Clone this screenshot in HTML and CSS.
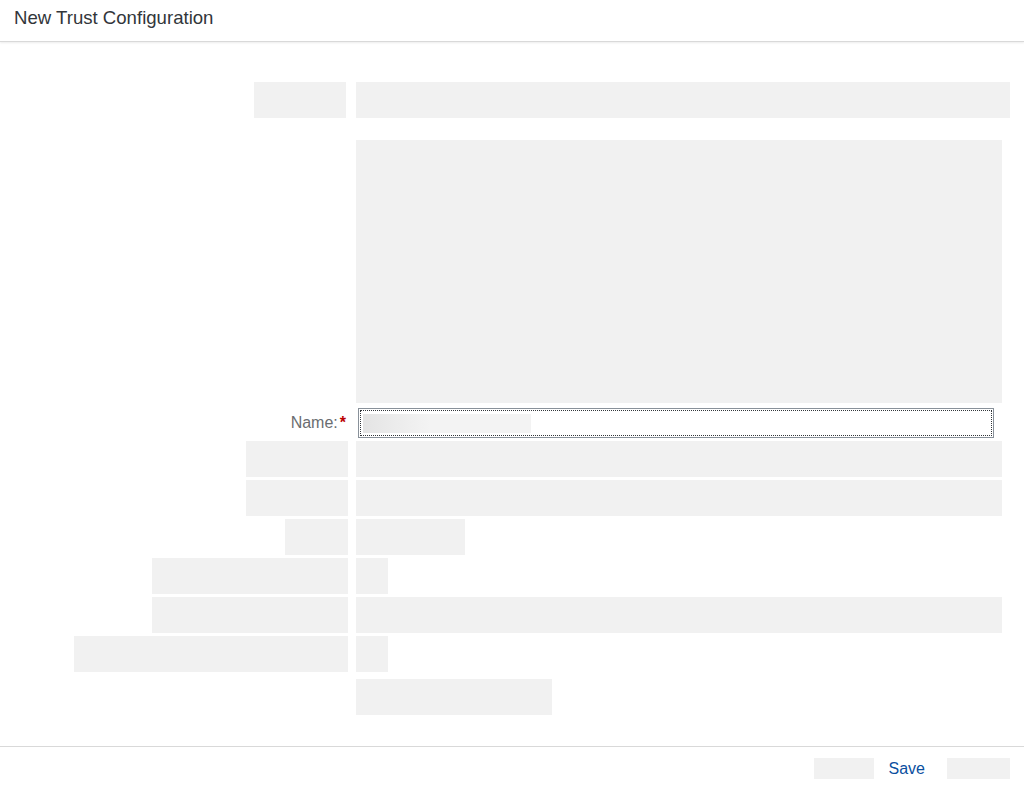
FILE: index.html
```html
<!DOCTYPE html>
<html>
<head>
<meta charset="utf-8">
<link rel="stylesheet" href="styles.css">
</head>
<body>
<div class="dialog">
  <header class="hdr"><h1 class="title">New Trust Configuration</h1></header>
  <main class="form">
    <div class="row r1">
      <div class="lab"><span class="ph w92 h36"></span></div>
      <div class="fld"><span class="ph w654 h36"></span></div>
    </div>
    <div class="row r2">
      <div class="lab"></div>
      <div class="fld"><span class="ph w646 h263"></span></div>
    </div>
    <div class="row rname">
      <div class="lab"><label class="name">Name:<span class="req">*</span></label></div>
      <div class="fld"><div class="input"><span class="blur"></span></div></div>
    </div>
    <div class="row rs">
      <div class="lab"><span class="ph w102 h36"></span></div>
      <div class="fld"><span class="ph w646 h36"></span></div>
    </div>
    <div class="row rs">
      <div class="lab"><span class="ph w102 h36"></span></div>
      <div class="fld"><span class="ph w646 h36"></span></div>
    </div>
    <div class="row rs">
      <div class="lab"><span class="ph w63 h36"></span></div>
      <div class="fld"><span class="ph w109 h36"></span></div>
    </div>
    <div class="row rs">
      <div class="lab"><span class="ph w196 h36"></span></div>
      <div class="fld"><span class="ph w32 h36"></span></div>
    </div>
    <div class="row rs">
      <div class="lab"><span class="ph w196 h36"></span></div>
      <div class="fld"><span class="ph w646 h36"></span></div>
    </div>
    <div class="row rs">
      <div class="lab"><span class="ph w274 h36"></span></div>
      <div class="fld"><span class="ph w32 h36"></span></div>
    </div>
    <div class="row rlast">
      <div class="lab"></div>
      <div class="fld"><span class="ph w196 h36"></span></div>
    </div>
  </main>
  <footer class="ftr">
    <span class="ph w60 h21"></span>
    <button class="btn">Save</button>
    <span class="ph w63 h21"></span>
  </footer>
</div>
</body>
</html>
```
FILE: styles.css
```css
* { box-sizing: border-box; }
html, body { margin: 0; padding: 0; background: #fff; }
body { font-family: "Liberation Sans", Arial, sans-serif; color: #32363a; }
.dialog { width: 1024px; height: 790px; display: flex; flex-direction: column; }
.hdr {
  height: 42px;
  border-bottom: 1px solid #d9d9d9;
  box-shadow: 0 1px 2px rgba(0,0,0,0.08);
  display: flex;
  align-items: center;
  padding: 0 14px;
  flex: none;
}
.title { margin: 0; font-size: 18.6px; font-weight: normal; color: #32363a; padding-bottom: 5px; }
.form { flex: 1; display: flex; flex-direction: column; padding-top: 40px; }
.row { display: flex; align-items: flex-start; }
.lab { width: 348px; display: flex; justify-content: flex-end; flex: none; }
.fld { margin-left: 8px; display: flex; }
.r1 .lab { width: 346px; }
.r1 .fld { margin-left: 10px; }
.r2 { margin-top: 22px; }
.rname { margin-top: 5px; height: 30px; align-items: center; }
.rname .lab { width: 346px; }
.rname .fld { margin-left: 12px; }
.rs { margin-top: 3px; }
.rlast { margin-top: 7px; }
.ph { display: block; background: #f1f1f1; }
.w92 { width: 92px; } .w654 { width: 654px; } .w646 { width: 646px; }
.w102 { width: 102px; } .w63 { width: 63px; } .w109 { width: 109px; }
.w196 { width: 196px; } .w32 { width: 32px; } .w274 { width: 274px; }
.w60 { width: 60px; }
.h36 { height: 36px; } .h263 { height: 263px; } .h21 { height: 21px; }
.name { font-size: 16px; color: #6a6d70; }
.req { color: #bb0000; font-weight: bold; margin-left: 2px; }
.input {
  width: 636px; height: 30px;
  border: 1px solid #89919a;
  outline: 1px dotted #32363a;
  outline-offset: -3px;
  background: #fff;
  display: flex; align-items: center;
  padding-left: 4px;
}
.blur {
  display: block; width: 168px; height: 19px;
  background: linear-gradient(90deg, #e4e4e4 0%, #ececec 20%, #f3f3f3 40%, #f3f3f3 100%);
}
.ftr {
  height: 44px;
  border-top: 1px solid #d9d9d9;
  display: flex; align-items: center; justify-content: flex-end;
  padding-right: 14px;
  flex: none;
}
.btn {
  border: 0; background: transparent; font-family: inherit;
  font-size: 16px; color: #0a4fa0; padding: 0; margin: 0 22px 0 15px;
  cursor: pointer;
}
```
